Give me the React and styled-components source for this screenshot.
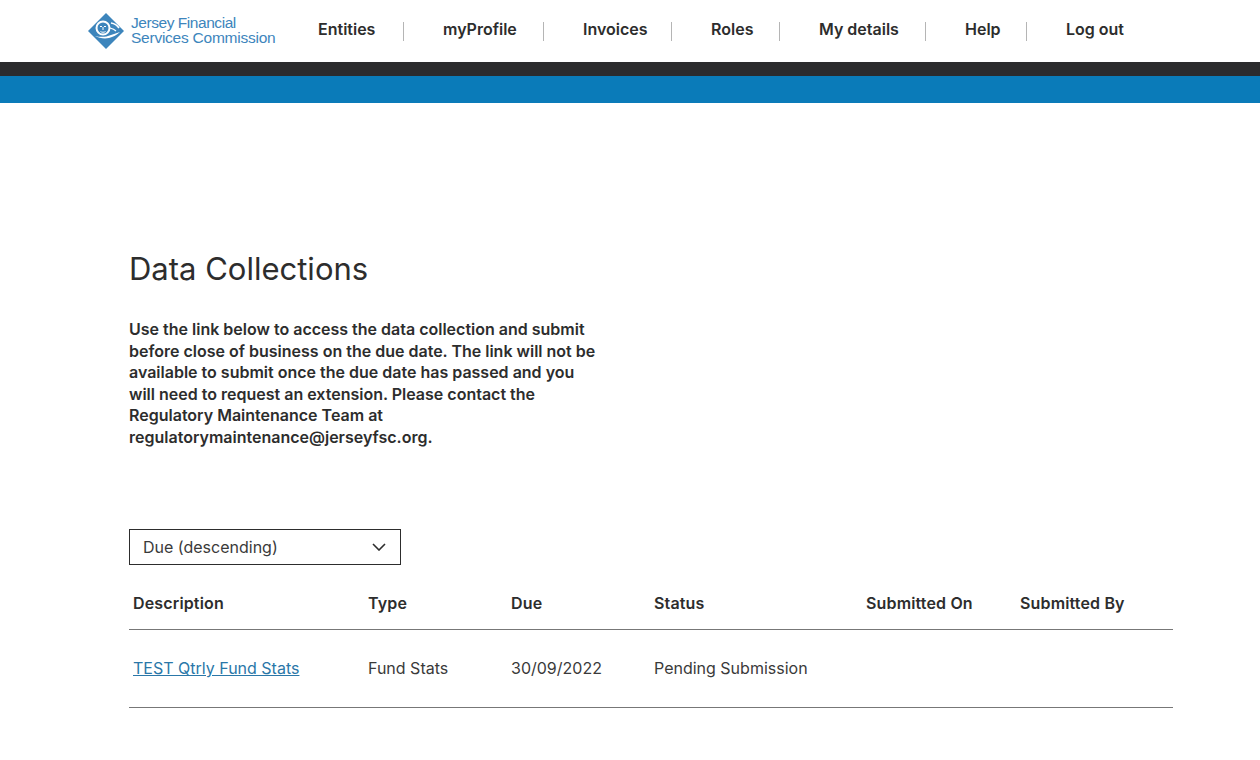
import React from "react";
import styled, { createGlobalStyle } from "styled-components";

const GlobalStyle = createGlobalStyle`
    html, body {
        margin: 0;
        padding: 0;
        background: #fff;
    }
    body {
        font-family: "Inter", "Liberation Sans", Arial, sans-serif;
        color: #2d2d2d;
    }
    * {
        box-sizing: border-box;
    }
`;

const Header = styled.header`
    height: 62px;
    padding-left: 87px;
    display: flex;
    align-items: center;
    background: #fff;
`;
const Logo = styled.a`
    width: 189px;
    margin-right: 42px;
    display: flex;
    align-items: center;
    gap: 6px;
    color: #3d85bc;
    text-decoration: none;
`;
const LogoText = styled.span`
    display: flex;
    flex-direction: column;
    font-family: "Liberation Sans", Arial, sans-serif;
    font-size: 15.5px;
    line-height: 14.5px;
    white-space: nowrap;
    margin-top: -1px;
`;
const LogoLine = styled.span`
    letter-spacing: ${(props) => props.$spacing}px;
`;
const Nav = styled.nav`
    display: flex;
    align-items: center;
    margin-top: 1px;
`;
const NavItem = styled.a`
    width: ${(props) => props.$width}px;
    height: 19px;
    padding-left: 39px;
    border-right: 1px solid #b5b5b5;
    font-size: 16px;
    line-height: 14px;
    font-weight: 600;
    color: #2d2d2d;
    white-space: nowrap;
    &:first-child {
        padding-left: 0;
    }
    &:last-child {
        border-right: none;
    }
`;
const DarkBar = styled.div`
    height: 14px;
    background: #2b2b2d;
`;
const BlueBar = styled.div`
    height: 27px;
    background: #0a7bb9;
`;
const Main = styled.main`
    width: 1044px;
    margin-left: 129px;
    padding-top: 146px;
`;
const Title = styled.h1`
    margin: 0 0 30px;
    font-size: 31px;
    line-height: 40px;
    font-weight: 400;
`;
const Intro = styled.p`
    width: 470px;
    margin: 0 0 80px;
    font-size: 16px;
    line-height: 21.6px;
    font-weight: 600;
`;
const Select = styled.div`
    width: 272px;
    height: 36px;
    padding: 0 14px 0 13px;
    display: flex;
    align-items: center;
    justify-content: space-between;
    border: 1px solid #2d2d2d;
    font-size: 16px;
    color: #3a3a3a;
`;
const Row = styled.div`
    display: grid;
    grid-template-columns: 235px 143px 143px 212px 154px 157px;
    align-items: center;
    border-bottom: 1px solid #777;
    height: ${(props) => props.$height}px;
    padding-top: ${(props) => props.$top}px;
`;
const HeadCell = styled.div`
    padding-left: 4px;
    font-size: 16px;
    font-weight: 600;
    letter-spacing: 0.15px;
    white-space: nowrap;
`;
const Cell = styled.div`
    padding-left: 4px;
    font-size: 16px;
    color: #3a3a3a;
    white-space: nowrap;
`;
const CellLink = styled.a`
    color: #2a77a8;
    text-decoration: underline;
`;

const navItems = [
    { label: "Entities", width: 86 },
    { label: "myProfile", width: 140 },
    { label: "Invoices", width: 128 },
    { label: "Roles", width: 108 },
    { label: "My details", width: 146 },
    { label: "Help", width: 101 },
    { label: "Log out", width: 100 },
];
const headings = ["Description", "Type", "Due", "Status", "Submitted On", "Submitted By"];

const LogoMark = () => (
    <svg width="38" height="38" viewBox="0 0 38 38">
        <path d="M19 1 L37 19 L19 37 L1 19 Z" fill="#3d85bc" />
        {/* lion head */}
        <circle cx="16" cy="16" r="6.5" fill="none" stroke="#fff" strokeWidth="2" />
        <path d="M13 14.5h2M17 14.5h2M16 15v3M13.5 19.5c1.5 1 3.5 1 5 0" fill="none" stroke="#fff" strokeWidth="1" />
        {/* wing and band */}
        <path d="M24 11c3 .5 6 2 8 5" fill="none" stroke="#fff" strokeWidth="1.6" />
        <path d="M23 16c2 .5 4 1 6 3" fill="none" stroke="#fff" strokeWidth="1.2" />
        <path d="M8 24c6 1.5 11 1 16-1 3-1 6-2 9-3-3 3-7 5-11 6-5 1-10 0-14-2z" fill="#fff" />
    </svg>
);

const Chevron = () => (
    <svg width="14" height="8" viewBox="0 0 14 8">
        <path d="M1 1 L7 7 L13 1" fill="none" stroke="#2d2d2d" strokeWidth="1.6" />
    </svg>
);

export default function App() {
    return (
        <>
            <GlobalStyle />
            <Header>
                <Logo>
                    <LogoMark />
                    <LogoText>
                        <LogoLine $spacing={-0.45}>Jersey Financial</LogoLine>
                        <LogoLine $spacing={-0.24}>Services Commission</LogoLine>
                    </LogoText>
                </Logo>
                <Nav>
                    {navItems.map((item) => (
                        <NavItem key={item.label} $width={item.width}>
                            {item.label}
                        </NavItem>
                    ))}
                </Nav>
            </Header>
            <DarkBar />
            <BlueBar />
            <Main>
                <Title>Data Collections</Title>
                <Intro>
                    Use the link below to access the data collection and submit before close of
                    business on the due date. The link will not be available to submit once the due
                    date has passed and you will need to request an extension. Please contact the
                    Regulatory Maintenance Team at regulatorymaintenance@jerseyfsc.org.
                </Intro>
                <Select>
                    Due (descending)
                    <Chevron />
                </Select>
                <Row $height={65} $top={12}>
                    {headings.map((heading) => (
                        <HeadCell key={heading}>{heading}</HeadCell>
                    ))}
                </Row>
                <Row $height={78} $top={0}>
                    <Cell>
                        <CellLink href="#">TEST Qtrly Fund Stats</CellLink>
                    </Cell>
                    <Cell>Fund Stats</Cell>
                    <Cell>30/09/2022</Cell>
                    <Cell>Pending Submission</Cell>
                    <Cell />
                    <Cell />
                </Row>
            </Main>
        </>
    );
}
